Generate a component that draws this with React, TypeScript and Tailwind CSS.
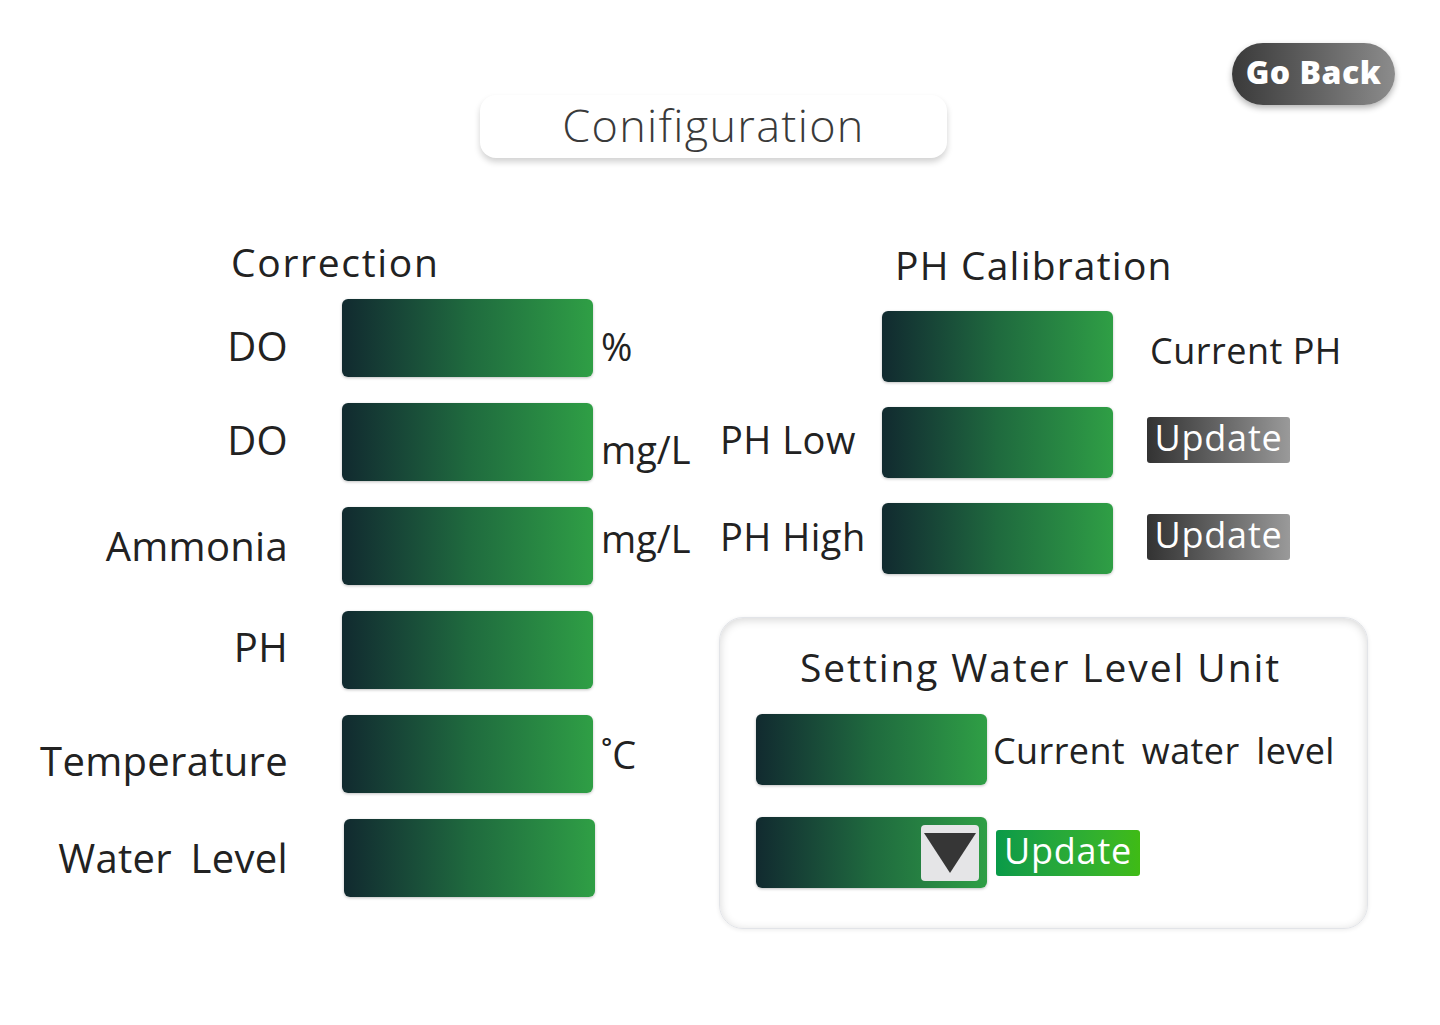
import React from "react";

const font = { fontFamily: '"Open Sans", "DejaVu Sans", sans-serif' };

function GreenBox({ w = "w-[251px]", h = "h-[78px]", children }: { w?: string; h?: string; children?: React.ReactNode }) {
  return (
    <div
      className={`${w} ${h} rounded-[6px] bg-gradient-to-r from-[#112a2f] via-[#1f6a3e] to-[#2f9f45] shadow-[0_1px_3px_rgba(0,0,0,0.25)] relative flex items-center justify-end`}
    >
      {children}
    </div>
  );
}

const leftRows: { label: string; unit?: string; lDy: string; uDy: string; ml?: string }[] = [
  { label: "DO", unit: "%", lDy: "translate-y-[8px]", uDy: "translate-y-[8px]" },
  { label: "DO", unit: "mg/L", lDy: "translate-y-[-2px]", uDy: "translate-y-[7px]" },
  { label: "Ammonia", unit: "mg/L", lDy: "translate-y-[0px]", uDy: "translate-y-[-8px]" },
  { label: "PH", lDy: "translate-y-[-3px]", uDy: "" },
  { label: "Temperature", unit: "˚C", lDy: "translate-y-[7px]", uDy: "translate-y-[0px]" },
  { label: "Water Level", lDy: "translate-y-[0px]", uDy: "", ml: "ml-[56px]" },
];

export default function App() {
  return (
    <div className="w-[1440px] h-[1025px] bg-white text-[#1f1f1f] overflow-hidden" style={font}>
      {/* header */}
      <div className="h-[170px] flex flex-col">
        <div className="flex justify-end pt-[43px] pr-[45px]">
          <button className="w-[163px] h-[62px] rounded-full bg-gradient-to-r from-[#3a3a3a] to-[#8c8c8c] shadow-[0_3px_6px_rgba(0,0,0,0.3)] text-white text-[32px] font-extrabold leading-none tracking-[0.5px] flex items-center justify-center">
            <span className="translate-y-[-2px]">Go Back</span>
          </button>
        </div>
        <div className="ml-[480px] mt-[-10px] w-[467px] h-[63px] rounded-[16px] bg-white shadow-[0_4px_6px_rgba(0,0,0,0.18)] flex items-center justify-center">
          <span className="text-[45px] font-light text-[#3a3a3a] leading-none tracking-[1.3px] translate-y-[-2px]">Conifiguration</span>
        </div>
      </div>

      {/* main */}
      <div className="flex items-start">
        {/* left column */}
        <div className="w-[719px] flex flex-col">
          <div className="mt-[73px] h-[38px] pl-[231px] text-[39px] font-medium leading-[38px] tracking-[1.7px] text-[#222]">Correction</div>
          <div className="mt-[18px] flex flex-col gap-[26px]">
            {leftRows.map((r, i) => (
              <div key={i} className="flex items-center h-[78px]">
                <div className={`w-[288px] text-right text-[40px] leading-none tracking-[0.3px] [word-spacing:8px] text-[#222] ${r.lDy}`}>{r.label}</div>
                <div className={r.ml ?? "ml-[54px]"}>
                  <GreenBox />
                </div>
                {r.unit && (
                  <div className={`ml-[8px] text-[38px] leading-none text-[#222] ${r.uDy}`}>{r.unit}</div>
                )}
              </div>
            ))}
          </div>
        </div>

        {/* right column */}
        <div className="flex flex-col w-[650px]">
          <div className="mt-[76px] h-[38px] pl-[176px] text-[39px] font-medium leading-[38px] tracking-[1.2px] text-[#222]">PH Calibration</div>
          <div className="mt-[27px] flex flex-col gap-[25px]">
            <div className="flex items-center h-[71px]">
              <div className="w-[163px]" />
              <GreenBox w="w-[231px]" h="h-[71px]" />
              <div className="ml-[37px] text-[36px] leading-none tracking-[0.5px] translate-y-[4px] text-[#222]">Current PH</div>
            </div>
            {["PH Low", "PH High"].map((l, i) => (
              <div key={l} className="flex items-center h-[71px]">
                <div className={`w-[163px] pl-[1px] text-[38px] leading-none tracking-[0.5px] text-[#222] ${i === 0 ? "translate-y-[-4px]" : "translate-y-[-3px]"}`}>{l}</div>
                <GreenBox w="w-[231px]" h="h-[71px]" />
                <div className={`ml-[34px] w-[143px] h-[46px] rounded-[3px] bg-gradient-to-r from-[#333333] to-[#9a9a9a] text-white text-[36px] leading-none flex items-center justify-center ${i === 0 ? "translate-y-[-3px]" : "translate-y-[-2px]"}`}>
                  <span className="translate-y-[-2px] tracking-[0.8px]">Update</span>
                </div>
              </div>
            ))}
          </div>

          {/* water level unit panel */}
          <div className="mt-[43px] w-[649px] h-[312px] rounded-[24px] border border-[#e2e4e8] shadow-[inset_0_2px_10px_rgba(0,0,0,0.16),0_1px_4px_rgba(0,0,0,0.08)] flex flex-col">
            <div className="mt-[30px] pl-[80px] text-[39px] font-medium leading-[38px] text-[#222] tracking-[1.9px]">Setting Water Level Unit</div>
            <div className="mt-[28px] ml-[36px] flex items-center">
              <GreenBox w="w-[231px]" h="h-[71px]" />
              <div className="ml-[6px] text-[36px] leading-none tracking-[0.4px] [word-spacing:7px] text-[#222] translate-y-[1px]">Current water level</div>
            </div>
            <div className="mt-[32px] ml-[36px] flex items-center">
              <GreenBox w="w-[231px]" h="h-[71px]">
                <div className="mr-[8px] w-[58px] h-[56px] rounded-[4px] bg-[#e5e5e7] flex items-center justify-center">
                  <svg width="52" height="40" viewBox="0 0 52 40">
                    <polygon points="0,0 52,0 26,40" fill="#363636" />
                  </svg>
                </div>
              </GreenBox>
              <div className="ml-[9px] w-[144px] h-[46px] rounded-[3px] bg-gradient-to-r from-[#089a48] to-[#3fbb14] text-white text-[36px] leading-none flex items-center justify-center">
                <span className="translate-y-[-2px] tracking-[0.8px]">Update</span>
              </div>
            </div>
          </div>
        </div>
      </div>
    </div>
  );
}
